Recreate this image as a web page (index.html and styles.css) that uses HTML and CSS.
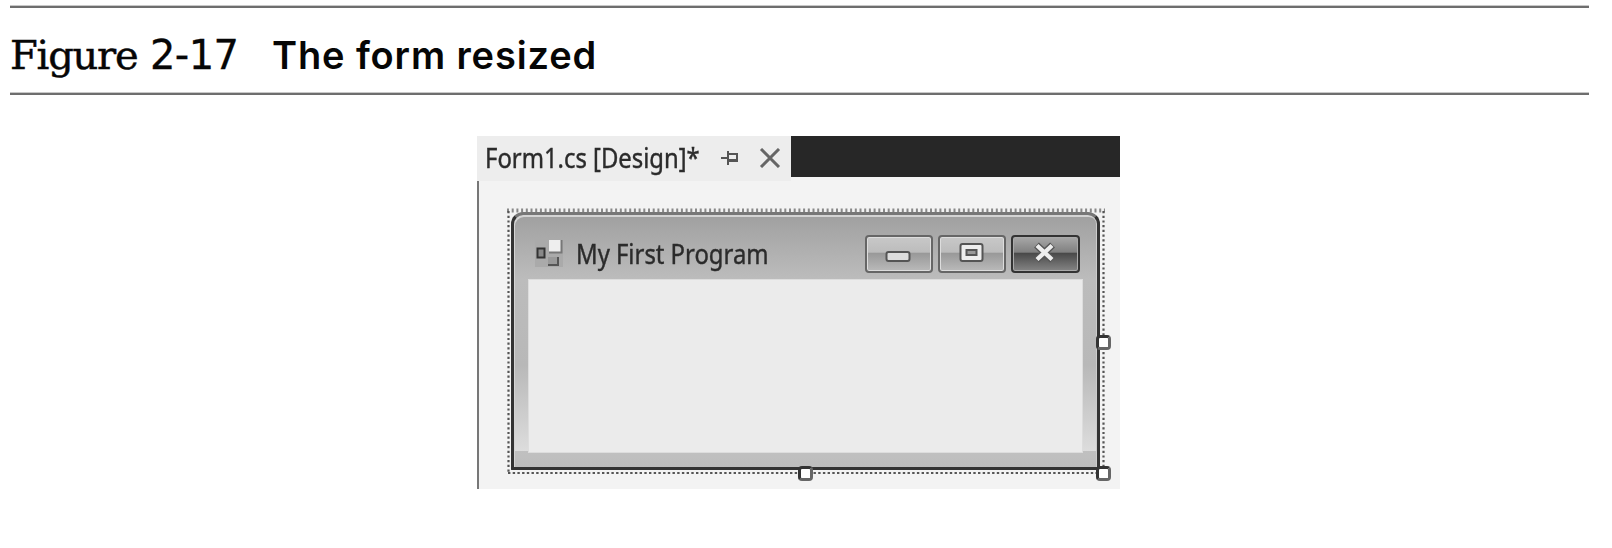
FILE: index.html
```html
<!DOCTYPE html>
<html lang="en">
<head>
<meta charset="utf-8">
<title>Figure 2-17</title>
<link rel="stylesheet" href="styles.css">
</head>
<body>
<figure class="figure">
  <figcaption class="caption">
    <span class="label">Figure</span>
    <span class="number">2-17</span>
    <span class="title">The form resized</span>
  </figcaption>
  <div class="designer">
    <div class="tabs">
      <div class="tab">
        <span class="tab-name">Form1.cs [Design]*</span>
        <svg class="pin" width="20" height="18" viewBox="0 0 20 18" fill="none" stroke="#555" stroke-width="2"><path d="M1 9H8M8 2V16M8 5H17V12"/><path d="M8 11.5H18" stroke-width="3"/></svg>
        <svg class="close" width="22" height="20" viewBox="0 0 22 20" fill="none" stroke="#666" stroke-width="3"><path d="M2 1L20 19M20 1L2 19"/></svg>
      </div>
      <div class="strip"></div>
    </div>
    <div class="surface">
      <div class="selection">
        <svg class="dots" width="600" height="268" viewBox="0 0 600 268" fill="none" stroke="#555"><path d="M1 2.500H599" stroke-width="4" stroke-dasharray="2 2.700" stroke="#888"/><path d="M2.500 3V265M597.500 3V265" stroke-width="2.200" stroke-dasharray="2.200 2.500"/><path d="M2 265H598" stroke-width="2.200" stroke-dasharray="2.400 2.300"/></svg>
        <div class="window">
          <div class="titlebar">
            <svg class="app" width="28" height="28" viewBox="0 0 28 28"><path fill="#aaa" d="M0 0h28v28H0z"/><path fill="#888" stroke="#333" stroke-width="2" d="M2.500 9.500h7v9h-7z"/><path fill="#eee" d="M14 1h12v12H14z"/><path d="M14 13.500H26.500V1" fill="none" stroke="#777" stroke-width="2"/><path fill="#999" d="M13 18h10v8H13z"/><path d="M13 26H23V18" fill="none" stroke="#555" stroke-width="2"/></svg>
            <span class="window-name">My First Program</span>
            <div class="buttons">
              <div class="btn"><svg width="64" height="35" viewBox="0 0 64 35"><rect x="19.500" y="15" width="23" height="9" rx="2" fill="#ddd" stroke="#555" stroke-width="2"/></svg></div>
              <div class="btn"><svg width="64" height="35" viewBox="0 0 64 35"><rect x="20.500" y="7" width="22" height="17" rx="2" fill="#eee" stroke="#555" stroke-width="2"/><rect x="26.500" y="13" width="10" height="5" fill="#999" stroke="#555" stroke-width="2"/></svg></div>
              <div class="btn btn-close"><svg width="65" height="35" viewBox="0 0 65 35" fill="none"><path d="M23.500 8L39.500 23M39.500 8L23.500 23" stroke="#555" stroke-width="7"/><path d="M24 8.500L39 22.500M39 8.500L24 22.500" stroke="#eee" stroke-width="4.300"/></svg></div>
            </div>
          </div>
          <div class="client"></div>
        </div>
        <i class="handle handle-right"></i>
        <i class="handle handle-corner"></i>
        <i class="handle handle-bottom"></i>
      </div>
    </div>
  </div>
</figure>
</body>
</html>
```
FILE: styles.css
```css
* { box-sizing: border-box; }
body { margin: 0; background: #fff; color: #060606; }
.figure { margin: 0; padding: 5px 23px 0 10px; }
.caption {
  display: flex;
  align-items: baseline;
  height: 90px;
  padding-top: 26px;
  line-height: 48px;
  white-space: nowrap;
  background: linear-gradient(#c8c8c8 0 1px, #6e6e6e 1px 3px, transparent 3px 87px, #c8c8c8 87px 88px, #6e6e6e 88px 90px);
}
.label { width: 140px; font: 40px/48px "DejaVu Serif", serif; letter-spacing: -1.2px; -webkit-text-stroke: .5px #060606; }
.number { width: 122px; font: 40px/48px "DejaVu Sans", sans-serif; letter-spacing: -.6px; -webkit-text-stroke: .3px #060606; }
.title { font: 600 38px/48px Inter, sans-serif; letter-spacing: .87px; }
.designer {
  width: 643px;
  height: 353px;
  margin: 41px 0 0 467px;
  display: flex;
  flex-direction: column;
  background: #f3f3f3;
  filter: blur(.7px);
}
.tabs { display: flex; height: 45px; }
.tab {
  width: 314px;
  display: flex;
  align-items: center;
  padding: 0 9px 2px 8px;
  background: #ededed;
}
.tab-name, .window-name {
  font: 26.5px/36px "Noto Sans", sans-serif;
  white-space: nowrap;
  color: #2b2b2b;
  -webkit-text-stroke: .4px #2b2b2b;
  transform-origin: left;
}
.tab-name { width: 235px; transform: scaleX(.9); }
.pin { flex: none; }
.close { flex: none; margin-left: 19px; }
.strip { flex: 1; height: 41px; background: #272727; }
.surface { flex: 1; border-left: 2px solid #777; padding: 27px 0 0 27px; }
.selection { position: relative; width: 600px; height: 268px; padding: 4px 0 0 5px; }
.dots { position: absolute; left: 0; top: 0; }
.window {
  position: relative;
  width: 589px;
  height: 258px;
  border: 3px solid #333;
  border-top-color: #777;
  border-radius: 12px 12px 1px 1px;
  padding: 0 14px 15px;
  background: linear-gradient(#c0c0c0, #bdbdbd) 0 100% / 100% 16px no-repeat, linear-gradient(#a0a0a0 0, #bcbcbc 64px, #b8b8b8 150px, #dddddd 237px);
  box-shadow: inset 1px 2px 0 #d4d4d4, inset -1px 0 0 #ccc;
}
.titlebar { display: flex; height: 64px; padding: 20px 2px 0 7px; }
.app { flex: none; margin-top: 4px; }
.window-name { width: 289px; margin: 1px 0 0 13px; transform: scaleX(.9); flex: none; }
.buttons { display: flex; gap: 5px; }
.btn {
  width: 68px;
  height: 38px;
  flex: none;
  border: 2px solid #666;
  border-radius: 4px;
  background: linear-gradient(#c8c8c8, #bcbcbc 45%, #989898 47%, #bababa);
  box-shadow: inset 0 0 0 1px #ddd;
}
.btn svg { display: block; }
.btn-close {
  width: 69px;
  border-color: #333;
  background: linear-gradient(#a8a8a8, #808080 45%, #484848 47%, #858585);
  box-shadow: inset 0 0 0 1px #aaa;
}
.client { height: 174px; background: #ebebeb; border: 1px solid #ddd; }
.handle {
  position: absolute;
  width: 15px;
  height: 15px;
  border: 3px solid #333;
  border-right-color: #666;
  border-bottom-color: #666;
  border-radius: 4px;
  background: #fff;
}
.handle-right { left: 590px; top: 127px; }
.handle-corner { left: 590px; top: 258px; }
.handle-bottom { left: 292px; top: 258px; }
```
